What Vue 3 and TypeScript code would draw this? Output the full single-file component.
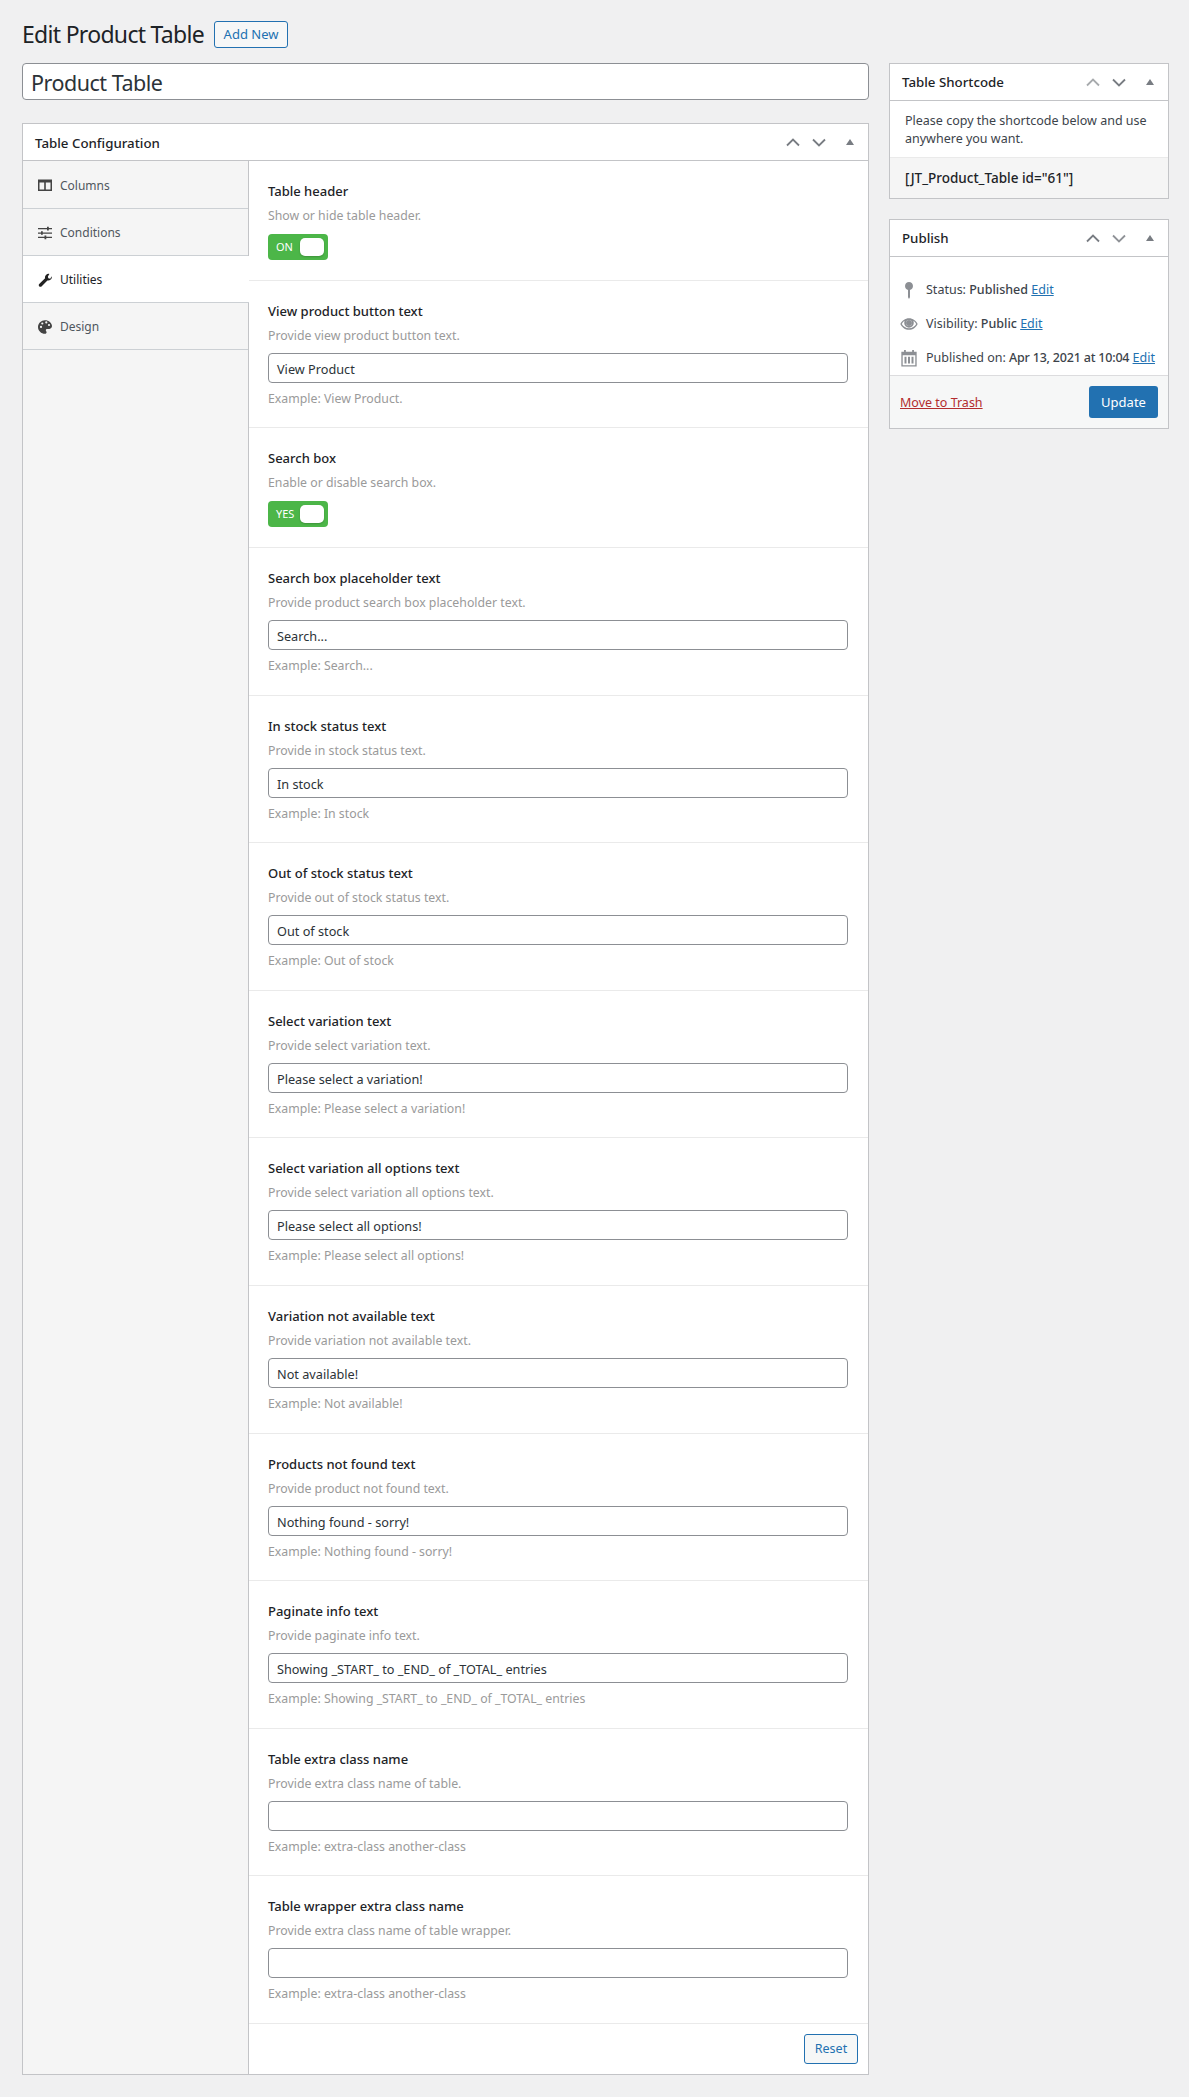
<script setup lang="ts">
interface Field { label: string; desc: string; type: 'switch' | 'text'; on?: string; value?: string; example?: string }
const fields: Field[] = [
  { label: 'Table header', desc: 'Show or hide table header.', type: 'switch', on: 'ON' },
  { label: 'View product button text', desc: 'Provide view product button text.', type: 'text', value: 'View Product', example: 'Example: View Product.' },
  { label: 'Search box', desc: 'Enable or disable search box.', type: 'switch', on: 'YES' },
  { label: 'Search box placeholder text', desc: 'Provide product search box placeholder text.', type: 'text', value: 'Search...', example: 'Example: Search...' },
  { label: 'In stock status text', desc: 'Provide in stock status text.', type: 'text', value: 'In stock', example: 'Example: In stock' },
  { label: 'Out of stock status text', desc: 'Provide out of stock status text.', type: 'text', value: 'Out of stock', example: 'Example: Out of stock' },
  { label: 'Select variation text', desc: 'Provide select variation text.', type: 'text', value: 'Please select a variation!', example: 'Example: Please select a variation!' },
  { label: 'Select variation all options text', desc: 'Provide select variation all options text.', type: 'text', value: 'Please select all options!', example: 'Example: Please select all options!' },
  { label: 'Variation not available text', desc: 'Provide variation not available text.', type: 'text', value: 'Not available!', example: 'Example: Not available!' },
  { label: 'Products not found text', desc: 'Provide product not found text.', type: 'text', value: 'Nothing found - sorry!', example: 'Example: Nothing found - sorry!' },
  { label: 'Paginate info text', desc: 'Provide paginate info text.', type: 'text', value: 'Showing _START_ to _END_ of _TOTAL_ entries', example: 'Example: Showing _START_ to _END_ of _TOTAL_ entries' },
  { label: 'Table extra class name', desc: 'Provide extra class name of table.', type: 'text', value: '', example: 'Example: extra-class another-class' },
  { label: 'Table wrapper extra class name', desc: 'Provide extra class name of table wrapper.', type: 'text', value: '', example: 'Example: extra-class another-class' },
]
</script>

<template>
  <div class="page">
    <div class="heading">
      <h1>Edit Product Table</h1>
      <a class="add-new">Add New</a>
    </div>
    <div class="columns">
      <main class="main">
        <div class="title-input">Product Table</div>
        <section class="box config">
          <header class="box-head">
            <h2>Table Configuration</h2>
            <div class="controls">
              <svg class="chev" viewBox="0 0 14 9"><path d="M1 7.500 7 1.500l6 6" /></svg>
              <svg class="chev" viewBox="0 0 14 9"><path d="M1 1.500l6 6 6-6" /></svg>
              <svg class="tri" viewBox="0 0 10 8"><path d="M5 1l4 6H1z" /></svg>
            </div>
          </header>
          <div class="config-body">
            <nav class="tabs">
              <div class="tab">
                <svg class="tab-icon" viewBox="0 0 14 14"><path fill-rule="evenodd" d="M0 1.500h14v11.500H0zM1.500 4.500v7h4.700v-7zm6.300 0v7h4.700v-7z" /></svg>
                <span>Columns</span>
              </div>
              <div class="tab">
                <svg class="tab-icon" viewBox="0 0 14 14"><path d="M0 2h14v1.300H0zM0 6.400h14v1.300H0zM0 10.800h14v1.300H0zM9 .8h1.800v3.600H9zM3 5.200h1.800v3.600H3zM6.500 9.600h1.800v3.600H6.500z" /></svg>
                <span>Conditions</span>
              </div>
              <div class="tab active">
                <svg class="tab-icon" viewBox="0 0 14 14"><path d="M13.700 3.200c.3 1.200 0 2.500-1 3.400-.9.900-2.200 1.200-3.300.9l-5.900 5.900c-.6.600-1.600.6-2.200 0l-.1-.1c-.6-.6-.6-1.600 0-2.200l5.900-5.900c-.3-1.100 0-2.400.9-3.300.9-1 2.200-1.300 3.400-1L9.900 3.400l.4 1.900 1.900.4z" /></svg>
                <span>Utilities</span>
              </div>
              <div class="tab">
                <svg class="tab-icon" viewBox="0 0 14 14"><path fill-rule="evenodd" d="M7 .2C3.200.2 0 3.200 0 7s3.200 6.800 7 6.800c1 0 1.600-.7 1.600-1.500 0-.4-.2-.7-.4-1-.2-.3-.4-.6-.4-1 0-.8.700-1.300 1.500-1.300h1.800c1.500 0 2.900-1.200 2.900-2.900C14 2.900 10.800.2 7 .2zM3 8a1.100 1.100 0 1 1 0-2.200A1.100 1.100 0 0 1 3 8zm1.300-3.400a1.100 1.100 0 1 1 0-2.200 1.100 1.100 0 0 1 0 2.200zm4-1.100a1.100 1.100 0 1 1 0-2.200 1.100 1.100 0 0 1 0 2.200zm2.700 2.600a1.100 1.100 0 1 1 0-2.200 1.100 1.100 0 0 1 0 2.200z" /></svg>
                <span>Design</span>
              </div>
            </nav>
            <div class="fields">
              <div v-for="f in fields" :key="f.label" class="field">
                <div class="label">{{ f.label }}</div>
                <div class="desc">{{ f.desc }}</div>
                <div v-if="f.type === 'switch'" class="switch">
                  <span class="switch-text">{{ f.on }}</span>
                  <span class="knob"></span>
                </div>
                <template v-else>
                  <div class="text-input">{{ f.value }}</div>
                  <div class="example">{{ f.example }}</div>
                </template>
              </div>
              <div class="reset-row"><a class="reset">Reset</a></div>
            </div>
          </div>
        </section>
      </main>
      <aside class="side">
        <section class="box">
          <header class="box-head">
            <h2>Table Shortcode</h2>
            <div class="controls">
              <svg class="chev faded" viewBox="0 0 14 9"><path d="M1 7.500 7 1.500l6 6" /></svg>
              <svg class="chev" viewBox="0 0 14 9"><path d="M1 1.500l6 6 6-6" /></svg>
              <svg class="tri" viewBox="0 0 10 8"><path d="M5 1l4 6H1z" /></svg>
            </div>
          </header>
          <p class="short-text">Please copy the shortcode below and use anywhere you want.</p>
          <div class="short-code">[JT_Product_Table id="61"]</div>
        </section>
        <section class="box">
          <header class="box-head">
            <h2>Publish</h2>
            <div class="controls">
              <svg class="chev" viewBox="0 0 14 9"><path d="M1 7.500 7 1.500l6 6" /></svg>
              <svg class="chev faded-down" viewBox="0 0 14 9"><path d="M1 1.500l6 6 6-6" /></svg>
              <svg class="tri" viewBox="0 0 10 8"><path d="M5 1l4 6H1z" /></svg>
            </div>
          </header>
          <div class="pub-rows">
            <div class="pub-row">
              <svg class="pub-icon" viewBox="0 0 20 20"><path d="M10 1a4.600 4.600 0 0 1 1.100 9V18l-1.100 2-1.100-2v-8A4.600 4.600 0 0 1 10 1z" /></svg>
              <span>Status: <b>Published</b> <a>Edit</a></span>
            </div>
            <div class="pub-row">
              <svg class="pub-icon" viewBox="0 0 20 20"><path fill-rule="evenodd" d="M10 3.500c4.200 0 8 2.700 9.600 6.500-1.600 3.800-5.400 6.500-9.600 6.500S2 13.800.4 10C2 6.200 5.800 3.500 10 3.500zM5.200 6.500C3.900 7.300 2.800 8.500 2 10c1.500 2.800 4.600 4.800 8 4.800s6.500-2 8-4.800c-.8-1.500-1.900-2.700-3.200-3.500.3.700.5 1.500.5 2.300a5.300 5.300 0 0 1-10.600 0c0-.8.200-1.600.5-2.300zM10 5.500a3.300 3.300 0 1 0 0 6.600 3.300 3.300 0 0 0 0-6.600z" /><circle cx="10" cy="8.800" r="3.300" /></svg>
              <span>Visibility: <b>Public</b> <a>Edit</a></span>
            </div>
            <div class="pub-row">
              <svg class="pub-icon" viewBox="0 0 20 20"><path fill-rule="evenodd" d="M1.500 3h3V1h2v2h7V1h2v2h3v16.500h-17zM3 7v11h14V7zM5 8.500h2.200V16H5zm3.900 0h2.200V16H8.900zm3.900 0H15V16h-2.200z" /></svg>
              <span>Published on: <b class="date">Apr 13, 2021 at 10:04</b> <a>Edit</a></span>
            </div>
          </div>
          <div class="pub-foot">
            <a class="trash">Move to Trash</a>
            <a class="update">Update</a>
          </div>
        </section>
      </aside>
    </div>
  </div>
</template>

<style>
html, body { margin: 0; background: #f0f0f1; }
</style>

<style scoped>
.page {
  box-sizing: border-box;
  height: 2097px;
  padding: 21px 20px 0 22px;
  background: #f0f0f1;
  color: #3c434a;
  font: 13px/19px "Noto Sans", "Open Sans", sans-serif;
}
.heading { display: flex; align-items: center; height: 27px; }
h1 {
  margin: 0 10px 0 0;
  font-size: 23px;
  font-weight: 400;
  line-height: 27px;
  color: #1d2327;
  letter-spacing: -0.7px;
}
.add-new {
  box-sizing: border-box;
  width: 74px;
  height: 27px;
  border: 1px solid #2271b1;
  border-radius: 3px;
  background: #f6f7f7;
  color: #2271b1;
  font-size: 13px;
  line-height: 25px;
  text-align: center;
}
.columns { display: flex; gap: 20px; margin-top: 15px; align-items: flex-start; }
.main { width: 847px; flex: none; }
.side { width: 280px; flex: none; display: flex; flex-direction: column; gap: 20px; }
.title-input {
  box-sizing: border-box;
  height: 37px;
  padding: 1px 8px 0;
  border: 1px solid #8c8f94;
  border-radius: 4px;
  background: #fff;
  color: #2c3338;
  font-size: 21.500px;
  letter-spacing: -0.5px;
  line-height: 35px;
}
.box { box-sizing: border-box; border: 1px solid #c3c4c7; background: #fff; }
.config { margin-top: 23px; }
.box-head {
  display: flex;
  align-items: center;
  justify-content: space-between;
  height: 36px;
  padding: 0 13px 0 12px;
  border-bottom: 1px solid #c3c4c7;
}
h2 { margin: 1px 0 0; font-size: 13.300px; font-weight: 500; color: #1d2327; line-height: 19px; }
.config h2 { margin-top: 3px; }
.controls { display: flex; align-items: center; gap: 12px; }
.chev { width: 14px; height: 9px; fill: none; stroke: #787c82; stroke-width: 1.800; }
.chev.faded { stroke: #a7aaad; }
.chev.faded-down { stroke: #8f9297; }
.tri { width: 10px; height: 8px; margin-left: 7px; fill: #787c82; }
.config-body { display: flex; }
.tabs {
  box-sizing: border-box;
  width: 226px;
  flex: none;
  background: #f5f5f5;
  border-right: 1px solid #c3c4c7;
}
.tab {
  box-sizing: border-box;
  display: flex;
  align-items: center;
  gap: 8px;
  height: 47px;
  padding: 1px 0 0 15px;
  border-bottom: 1px solid #ccd0d4;
  color: #50575e;
  font-size: 12px;
}
.tab:first-child { height: 48px; }
.tab.active {
  margin-right: -1px;
  background: #fff;
  color: #1d2327;
}
.tab-icon { width: 14px; height: 14px; fill: #444; flex: none; }
.tab.active .tab-icon { fill: #222; }
.fields { flex: 1; min-width: 0; }
.field {
  box-sizing: border-box;
  padding: 21px 20px 0 19px;
  height: 147.600px;
  border-bottom: 1px solid #eaeaea;
}
.field:nth-child(2) { height: 147px; }
.field:has(.switch) { height: 120px; }
.label { font-size: 13px; line-height: 19px; font-weight: 500; color: #1d2327; }
.desc { margin-top: 6px; font-size: 12.300px; line-height: 18px; color: #9a9a9a; }
.switch {
  position: relative;
  box-sizing: border-box;
  width: 60px;
  height: 26px;
  margin-top: 9px;
  border-radius: 4px;
  background: #4cb648;
  color: #fff;
}
.switch-text { position: absolute; left: 8px; top: 4px; font-size: 11px; line-height: 18px; }
.knob { position: absolute; left: 32px; top: 4px; width: 24px; height: 18px; border-radius: 5px; background: #fff; box-shadow: 0 1px 2px rgba(0, 0, 0, 0.2); }
.text-input {
  box-sizing: border-box;
  height: 30px;
  margin-top: 8px;
  padding: 2px 8px 0;
  border: 1px solid #8c8f94;
  border-radius: 4px;
  background: #fff;
  color: #2c3338;
  font-size: 12.700px;
  line-height: 26px;
}
.example { margin-top: 7px; font-size: 12.300px; line-height: 18px; color: #9a9a9a; }
.reset-row { display: flex; justify-content: flex-end; padding: 10px 10px 10px 0; }
.reset {
  box-sizing: border-box;
  width: 54px;
  height: 30px;
  border: 1px solid #2271b1;
  border-radius: 3px;
  background: #f6f7f7;
  color: #2271b1;
  font-size: 12.500px;
  line-height: 28px;
  text-align: center;
}
.short-text { margin: 0; padding: 11px 12px 9px 15px; font-size: 12.500px; line-height: 18px; border-bottom: 1px solid #eaeaea; }
.short-code { padding: 11px 15px 10px; background: #f5f5f5; color: #1d2327; font-size: 13.500px; font-weight: 500; line-height: 19px; }
.pub-rows { padding: 23px 10px 8px; display: flex; flex-direction: column; gap: 15px; }
.pub-row { display: flex; align-items: center; gap: 8px; height: 19px; font-size: 12.500px; white-space: nowrap; }
.pub-icon { width: 18px; height: 18px; fill: #8c8f94; flex: none; }
b { font-weight: 500; }
.date { letter-spacing: -0.2px; }
a { color: #2271b1; }
.pub-row a { text-decoration: underline; }
.pub-foot {
  display: flex;
  align-items: center;
  justify-content: space-between;
  height: 52px;
  padding: 0 10px;
  border-top: 1px solid #dcdcde;
  background: #f6f7f7;
}
.trash { color: #b32d2e; text-decoration: underline; font-size: 12.500px; }
.update {
  box-sizing: border-box;
  width: 69px;
  height: 32px;
  border-radius: 3px;
  background: #2271b1;
  color: #fff;
  font-size: 13px;
  line-height: 32px;
  text-align: center;
}
</style>
